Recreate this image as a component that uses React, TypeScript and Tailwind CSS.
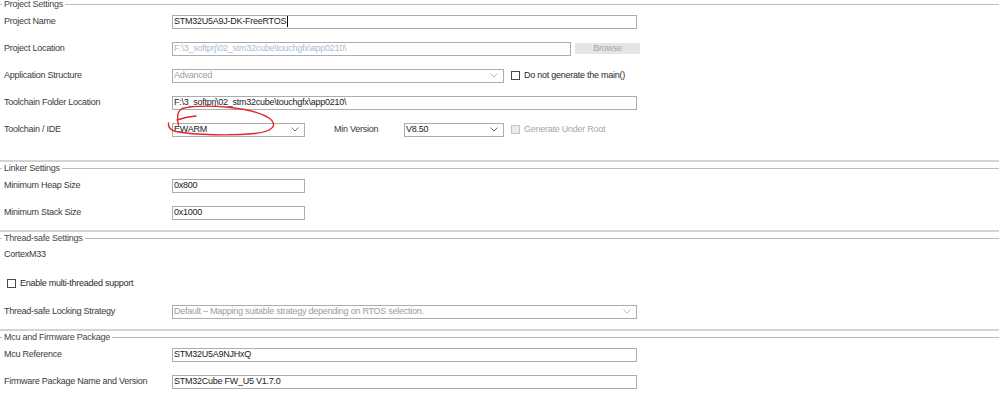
import type { ReactNode } from 'react'
import clsx from 'clsx'

function Legend({ title }: { title: string }) {
  return (
    <div className="flex h-[7px] items-center">
      <span className="h-px w-[2px] bg-[#b8bdc2]" />
      <span className="px-[2px] leading-none whitespace-nowrap text-[#454545]">{title}</span>
      <span className="h-px flex-1 bg-[#b8bdc2]" />
    </div>
  )
}

function Row({ label, children, className }: { label?: string; children?: ReactNode; className?: string }) {
  return (
    <div className={clsx('flex items-center', className ?? 'h-[27px]')}>
      <div className="w-[172px] shrink-0 whitespace-nowrap pl-[4px] text-[#3a3a3a]">{label}</div>
      {children}
    </div>
  )
}

function TextBox({
  width,
  value,
  tone = 'text-[#222]',
  caret,
}: {
  width: string
  value: string
  tone?: string
  caret?: boolean
}) {
  return (
    <div className={clsx('flex h-[14px] shrink-0 items-center border border-[#adadad] bg-white pl-[1px]', width)}>
      <span className={clsx('leading-none whitespace-nowrap', tone)}>{value}</span>
      {caret && <span className="ml-px h-[11px] w-px bg-black" />}
    </div>
  )
}

function Select({
  width,
  value,
  disabled,
}: {
  width: string
  value: string
  disabled?: boolean
}) {
  return (
    <div
      className={clsx(
        'flex h-[14px] shrink-0 items-center justify-between border border-[#adadad] bg-white pl-[1px] pr-[5px]',
        width,
      )}
    >
      <span className={clsx('leading-none whitespace-nowrap', disabled ? 'text-[#9c9c9c]' : 'text-[#222]')}>
        {value}
      </span>
      <svg width="8" height="5" viewBox="0 0 8 5">
        <polyline
          points="0.5,0.5 4,4 7.5,0.5"
          fill="none"
          stroke={disabled ? '#b5b5b5' : '#6a6a6a'}
          strokeWidth="1"
        />
      </svg>
    </div>
  )
}

function Check({ label, disabled, className }: { label: string; disabled?: boolean; className?: string }) {
  return (
    <div className={clsx('flex items-center', className)}>
      <span
        className={clsx(
          'h-[9px] w-[9px] border',
          disabled ? 'border-[#c4c4c4] bg-[#ececec]' : 'border-[#4a4a4a] bg-white',
        )}
      />
      <span className={clsx('ml-[4px] leading-none whitespace-nowrap', disabled ? 'text-[#a8a8a8]' : 'text-[#2a2a2a]')}>
        {label}
      </span>
    </div>
  )
}

export default function App() {
  return (
    <div className="relative h-[399px] w-[999px] overflow-hidden bg-white font-['Liberation_Sans',Arial,sans-serif] text-[9px] tracking-[-0.25px]">
      <section className="border-b-2 border-[#d2d5d8] pb-[17px] pt-px">
        <Legend title="Project Settings" />
        <Row label="Project Name">
          <TextBox width="w-[465px]" value="STM32U5A9J-DK-FreeRTOS" caret />
        </Row>
        <Row label="Project Location">
          <TextBox width="w-[399px]" value="F:\3_softprj\02_stm32cube\touchgfx\app0210\" tone="text-[#a9bdd3]" />
          <div className="ml-[4px] flex h-[11px] w-[65px] items-center justify-center bg-[#e3e6e9] leading-none text-[#a3a7ab]">
            Browse
          </div>
        </Row>
        <Row label="Application Structure">
          <Select width="w-[332px]" value="Advanced" disabled />
          <Check className="ml-[7px]" label="Do not generate the main()" />
        </Row>
        <Row label="Toolchain Folder Location">
          <TextBox width="w-[465px]" value="F:\3_softprj\02_stm32cube\touchgfx\app0210\" />
        </Row>
        <Row label="Toolchain / IDE">
          <Select width="w-[133px]" value="EWARM" />
          <div className="ml-[29px] w-[70px] whitespace-nowrap text-[#3a3a3a]">Min Version</div>
          <Select width="w-[100px]" value="V8.50" />
          <Check className="ml-[7px]" label="Generate Under Root" disabled />
        </Row>
      </section>

      <section className="mt-[3px] border-b-2 border-[#d2d5d8] pb-[4px]">
        <Legend title="Linker Settings" />
        <Row label="Minimum Heap Size">
          <TextBox width="w-[133px]" value="0x800" />
        </Row>
        <Row label="Minimum Stack Size">
          <TextBox width="w-[133px]" value="0x1000" />
        </Row>
      </section>

      <section className="mt-[3px] border-b-2 border-[#d2d5d8] pb-[4px]">
        <Legend title="Thread-safe Settings" />
        <Row label="CortexM33" className="h-[26px]" />
        <div className="flex h-[30px] items-center pl-[7px]">
          <Check label="Enable multi-threaded support" />
        </div>
        <Row label="Thread-safe Locking Strategy">
          <Select width="w-[465px]" value="Default – Mapping suitable strategy depending on RTOS selection." disabled />
        </Row>
      </section>

      <section className="mt-[3px]">
        <Legend title="Mcu and Firmware Package" />
        <Row label="Mcu Reference">
          <TextBox width="w-[465px]" value="STM32U5A9NJHxQ" />
        </Row>
        <Row label="Firmware Package Name and Version">
          <TextBox width="w-[465px]" value="STM32Cube FW_U5 V1.7.0" />
        </Row>
      </section>

      {/* hand-drawn red annotation around the toolchain field */}
      <svg className="pointer-events-none absolute left-0 top-0" width="999" height="399" viewBox="0 0 999 399">
        <path
          d="M196 116 C189 116.5, 183 118, 177 120 M178.5 125 C177 118, 177.5 111, 182 108.5 C205 103.5, 252 107, 269 118 C278 124.5, 274 131.5, 255 133.5 C230 136, 195 135, 176 131.5 C170 130, 168 127, 168.5 123"
          fill="none"
          stroke="#e0262b"
          strokeWidth="1.4"
          strokeLinecap="round"
        />
      </svg>
    </div>
  )
}
